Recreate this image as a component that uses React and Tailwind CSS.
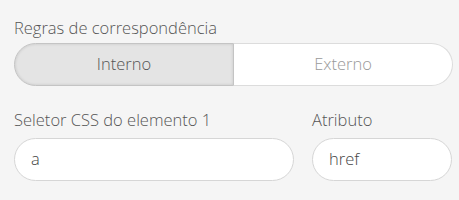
import React from 'react'

export default function App() {
  return (
    <div
      className="h-[200px] w-[459px] overflow-hidden bg-[#f5f5f5] pl-[14px] pt-[16px] text-[#555]"
      style={{ fontFamily: '"Open Sans", "Noto Sans", sans-serif' }}
    >
      {/* Regras */}
      <div className="text-[16.5px] font-[350] leading-[24px]">Regras de correspondência</div>
      <div className="mt-[3px] flex h-[43px] w-[439px]">
        <button className="flex-1 rounded-l-full border border-[#c4c4c4] bg-[#e4e4e4] text-[16.5px] font-[350] text-[#555] shadow-[inset_0_0_3px_rgba(0,0,0,0.14)]">
          Interno
        </button>
        <button className="flex-1 rounded-r-full border border-l-0 border-[#dcdcdc] bg-white text-[16.5px] font-[350] text-[#999]">
          Externo
        </button>
      </div>

      {/* Seletor / Atributo */}
      <div className="mt-[22px] grid grid-cols-[280px_140px] gap-x-[18px]">
        <div className="text-[16.5px] font-[350] leading-[24px]">Seletor CSS do elemento 1</div>
        <div className="text-[16.5px] font-[350] leading-[24px]">Atributo</div>
        <div className="mt-[6px] flex h-[43px] items-center rounded-full border border-[#d6d6d6] bg-white px-[16px] text-[16.5px] font-[350] text-[#444]">
          a
        </div>
        <div className="mt-[6px] flex h-[43px] items-center rounded-full border border-[#d6d6d6] bg-white px-[16px] text-[16.5px] font-[350] text-[#444]">
          href
        </div>
      </div>

      {/* next control, cut off */}
      <div className="ml-[16px] mt-[19px] h-[30px] w-[196px] rounded-full border border-[#cfcfcf] bg-[#ececec]" />
    </div>
  )
}
